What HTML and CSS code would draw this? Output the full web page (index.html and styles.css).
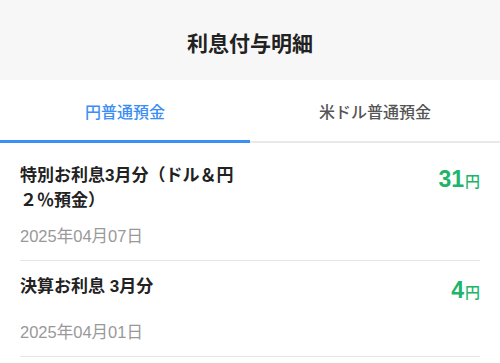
FILE: index.html
```html
<!DOCTYPE html>
<html lang="ja">
<head>
<meta charset="utf-8">
<link rel="stylesheet" href="styles.css">
</head>
<body>
<header class="page-header">
  <h1 class="page-title">利息付与明細</h1>
</header>
<nav class="tabs">
  <div class="tab tab-active">円普通預金</div>
  <div class="tab">米ドル普通預金</div>
</nav>
<ul class="list">
  <li class="item">
    <div class="item-row">
      <div class="item-title">特別お利息3月分（ドル＆円２％預金）</div>
      <div class="amount"><span class="amount-num">31</span><span class="amount-unit">円</span></div>
    </div>
    <div class="item-date">2025年04月07日</div>
  </li>
  <li class="item">
    <div class="item-row">
      <div class="item-title">決算お利息 3月分</div>
      <div class="amount"><span class="amount-num">4</span><span class="amount-unit">円</span></div>
    </div>
    <div class="item-date">2025年04月01日</div>
  </li>
</ul>
</body>
</html>
```
FILE: styles.css
```css
* {
  box-sizing: border-box;
}

body {
  margin: 0;
  background: #ffffff;
  font-family: "Liberation Sans", "Noto Sans CJK JP", sans-serif;
  color: #222222;
}

.page-header {
  height: 80px;
  background: #f7f7f7;
  display: flex;
  align-items: center;
  justify-content: center;
  padding-top: 3px;
}

.page-title {
  margin: 0;
  font-size: 21px;
  font-weight: bold;
  color: #222222;
}

.tabs {
  display: flex;
}

.tab {
  flex: 1;
  height: 63px;
  display: flex;
  align-items: center;
  justify-content: center;
  font-size: 16px;
  font-weight: 500;
  color: #555555;
  border-bottom: 2px solid #e9e9e9;
  padding-top: 1px;
}

.tab-active {
  color: #3a8ef5;
  border-bottom: 3px solid #3a8ef5;
  padding-top: 2px;
}

.list {
  list-style: none;
  margin: 0;
  padding: 7px 20px 0;
}

.item {
  padding: 13px 0 14px;
  border-bottom: 1px solid #e6e6e6;
}

.item-row {
  display: flex;
  justify-content: space-between;
  align-items: flex-start;
}

.item-title {
  max-width: 220px;
  font-size: 17px;
  line-height: 25px;
  font-weight: bold;
  color: #222222;
}

.amount {
  line-height: 32px;
  color: #20b46a;
  white-space: nowrap;
}

.amount-num {
  font-size: 23px;
  font-weight: bold;
}

.amount-unit {
  font-size: 15px;
  font-weight: 500;
  margin-left: 1px;
}

.item-date {
  margin-top: 13px;
  font-size: 16.5px;
  line-height: 20px;
  color: #999999;
}
```
